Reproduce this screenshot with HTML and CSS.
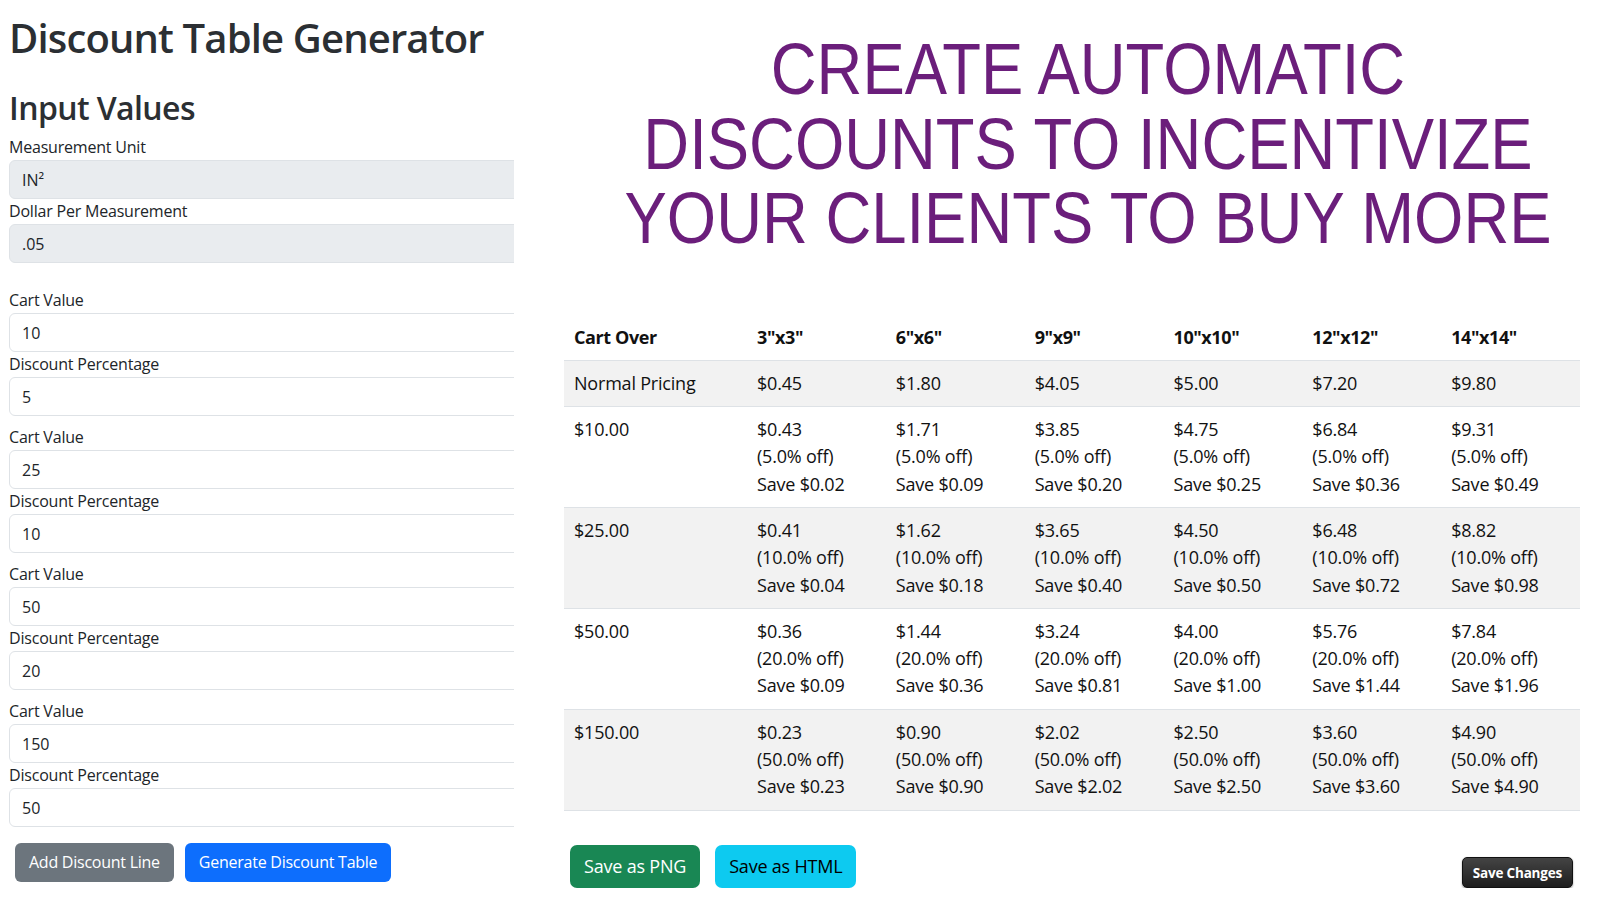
FILE: index.html
```html
<!DOCTYPE html>
<html lang="en">
<head>
    <meta charset="UTF-8">
    <meta name="viewport" content="width=device-width, initial-scale=1.0">
    <title>Discount Table Generator</title>
    <link rel="stylesheet" href="styles.css">
</head>

<body>
    <div class="page">
        <div class="side">
            <h1>Discount Table Generator</h1>
            <h2>Input Values</h2>
            <div class="base">
                <label>Measurement Unit</label>
                <input class="field" type="text" value="IN²" readonly>
                <label>Dollar Per Measurement</label>
                <input class="field" type="text" value=".05" readonly>
            </div>
            <div class="lines">
                <div class="line">
                    <label>Cart Value</label>
                    <input class="field" type="text" value="10">
                    <label>Discount Percentage</label>
                    <input class="field" type="text" value="5">
                </div>
                <div class="line">
                    <label>Cart Value</label>
                    <input class="field" type="text" value="25">
                    <label>Discount Percentage</label>
                    <input class="field" type="text" value="10">
                </div>
                <div class="line">
                    <label>Cart Value</label>
                    <input class="field" type="text" value="50">
                    <label>Discount Percentage</label>
                    <input class="field" type="text" value="20">
                </div>
                <div class="line">
                    <label>Cart Value</label>
                    <input class="field" type="text" value="150">
                    <label>Discount Percentage</label>
                    <input class="field" type="text" value="50">
                </div>
            </div>
            <div class="side-btns">
                <button class="btn btn-grey">Add Discount Line</button>
                <button class="btn btn-blue">Generate Discount Table</button>
            </div>
        </div>

        <div class="main">
            <div class="headline">
                <span>CREATE AUTOMATIC</span>
                <span>DISCOUNTS TO INCENTIVIZE</span>
                <span>YOUR CLIENTS TO BUY MORE</span>
            </div>

            <table class="prices">
                <thead>
                    <tr>
                        <th class="first">Cart Over</th>
                        <th>3"x3"</th>
                        <th>6"x6"</th>
                        <th>9"x9"</th>
                        <th>10"x10"</th>
                        <th>12"x12"</th>
                        <th>14"x14"</th>
                    </tr>
                </thead>
                <tbody>
                    <tr>
                        <td>Normal Pricing</td>
                        <td>$0.45</td>
                        <td>$1.80</td>
                        <td>$4.05</td>
                        <td>$5.00</td>
                        <td>$7.20</td>
                        <td>$9.80</td>
                    </tr>
                    <tr>
                        <td>$10.00</td>
                        <td>$0.43<br>(5.0% off)<br>Save $0.02</td>
                        <td>$1.71<br>(5.0% off)<br>Save $0.09</td>
                        <td>$3.85<br>(5.0% off)<br>Save $0.20</td>
                        <td>$4.75<br>(5.0% off)<br>Save $0.25</td>
                        <td>$6.84<br>(5.0% off)<br>Save $0.36</td>
                        <td>$9.31<br>(5.0% off)<br>Save $0.49</td>
                    </tr>
                    <tr>
                        <td>$25.00</td>
                        <td>$0.41<br>(10.0% off)<br>Save $0.04</td>
                        <td>$1.62<br>(10.0% off)<br>Save $0.18</td>
                        <td>$3.65<br>(10.0% off)<br>Save $0.40</td>
                        <td>$4.50<br>(10.0% off)<br>Save $0.50</td>
                        <td>$6.48<br>(10.0% off)<br>Save $0.72</td>
                        <td>$8.82<br>(10.0% off)<br>Save $0.98</td>
                    </tr>
                    <tr>
                        <td>$50.00</td>
                        <td>$0.36<br>(20.0% off)<br>Save $0.09</td>
                        <td>$1.44<br>(20.0% off)<br>Save $0.36</td>
                        <td>$3.24<br>(20.0% off)<br>Save $0.81</td>
                        <td>$4.00<br>(20.0% off)<br>Save $1.00</td>
                        <td>$5.76<br>(20.0% off)<br>Save $1.44</td>
                        <td>$7.84<br>(20.0% off)<br>Save $1.96</td>
                    </tr>
                    <tr>
                        <td>$150.00</td>
                        <td>$0.23<br>(50.0% off)<br>Save $0.23</td>
                        <td>$0.90<br>(50.0% off)<br>Save $0.90</td>
                        <td>$2.02<br>(50.0% off)<br>Save $2.02</td>
                        <td>$2.50<br>(50.0% off)<br>Save $2.50</td>
                        <td>$3.60<br>(50.0% off)<br>Save $3.60</td>
                        <td>$4.90<br>(50.0% off)<br>Save $4.90</td>
                    </tr>
                </tbody>
            </table>

            <div class="main-btns">
                <button class="btn btn-lg btn-green">Save as PNG</button>
                <button class="btn btn-lg btn-cyan">Save as HTML</button>
                <button class="btn-save">Save Changes</button>
            </div>
        </div>
    </div>
</body>

</html>
```

FILE: styles.css
```css
body {
    margin: 0;
    font-family: "Open Sans", "Noto Sans", sans-serif;
    color: #212529;
    background: #fff;
}

.page {
    display: flex;
    width: 1600px;
}

/* left form */
.side {
    width: 505px;
    flex: none;
    padding-left: 9px;
    overflow: hidden;
}

h1 {
    margin: 14px 0 0;
    font-size: 40px;
    line-height: 48px;
    font-weight: 600;
    letter-spacing: -0.85px;
    color: #2b2f33;
}

h2 {
    margin: 27px 0 8px;
    font-size: 32px;
    line-height: 38px;
    font-weight: 600;
    letter-spacing: -0.6px;
    color: #2b2f33;
}

label {
    display: block;
    font-size: 16px;
    line-height: 25px;
    letter-spacing: -0.2px;
}

.field {
    display: block;
    box-sizing: border-box;
    width: 540px;
    height: 39px;
    padding: 6px 12px;
    font-family: inherit;
    font-size: 16px;
    color: #212529;
    border: 1px solid #dee2e6;
    border-radius: 6px;
    background: #fff;
}

.field[readonly] {
    background: #e9ecef;
}

.lines {
    margin-top: 25px;
}

.line {
    margin-bottom: 9px;
}

.line:last-child {
    margin-bottom: 0;
}

.side-btns {
    display: flex;
    gap: 11px;
    margin: 16px 0 0 6px;
}

.btn {
    font-family: inherit;
    font-size: 16px;
    line-height: 25px;
    letter-spacing: -0.25px;
    padding: 6px 13px;
    border: 1px solid transparent;
    border-radius: 6px;
    color: #fff;
    cursor: pointer;
}

.btn-grey {
    background: #6c757d;
}

.btn-blue {
    background: #0d6efd;
}

/* right side */
.main {
    flex: 1;
    min-width: 0;
    margin-left: 50px;
    padding-right: 20px;
}

.headline {
    display: flex;
    flex-direction: column;
    align-items: center;
    margin: 32px 0 0 32px;
    font-family: "Liberation Sans", Arial, sans-serif;
    font-size: 72px;
    line-height: 74.5px;
    color: #6b1e7b;
    white-space: nowrap;
    transform: scaleX(0.881);
}

.prices {
    width: 1016px;
    margin-top: 59px;
    border-collapse: collapse;
    font-size: 18px;
    line-height: 27.3px;
    letter-spacing: -0.2px;
    color: #111;
}

.prices th,
.prices td {
    padding: 9px 10px;
    text-align: left;
    vertical-align: top;
    border-bottom: 1px solid #dee2e6;
}

.prices th {
    font-weight: 700;
    letter-spacing: -0.4px;
}

.prices .first {
    width: 163px;
}

.prices tbody tr:nth-child(odd) {
    background: #f2f2f2;
}

.main-btns {
    display: flex;
    align-items: flex-end;
    gap: 15px;
    margin-top: 34px;
    padding-left: 6px;
    width: 1003px;
}

.btn-lg {
    font-size: 18px;
    line-height: 27.6px;
    letter-spacing: -0.2px;
    padding: 7px 13px;
    border-radius: 7px;
}

.btn-green {
    background: #198754;
}

.btn-cyan {
    background: #0dcaf0;
    color: #000;
}

.btn-save {
    margin-left: auto;
    height: 31px;
    padding: 0 10px;
    font-family: "Open Sans", sans-serif;
    font-size: 13.5px;
    font-weight: 700;
    letter-spacing: -0.2px;
    color: #fff;
    background: linear-gradient(#444, #1e1e1e);
    border: 1px solid #111;
    border-radius: 5px;
    box-shadow: 0 1px 2px rgba(0, 0, 0, .4);
}
```
